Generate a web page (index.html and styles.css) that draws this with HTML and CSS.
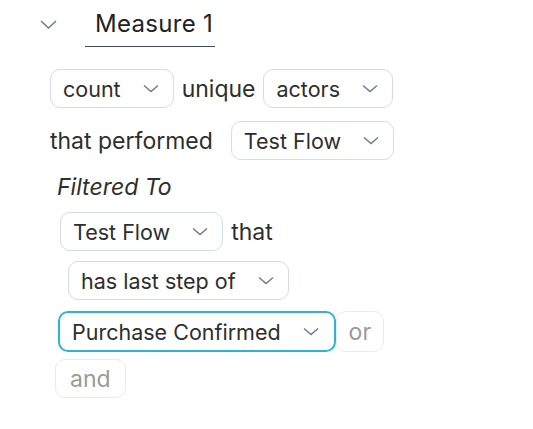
FILE: index.html
```html
<!DOCTYPE html>
<html>
<head>
<meta charset="utf-8">
<link rel="stylesheet" href="styles.css">
</head>
<body>
<div class="measure">
  <div class="header">
    <svg class="toggle" width="17" height="9" viewBox="0 0 17 9"><path d="M1 1l7.5 7L16 1" fill="none" stroke="#6b7a90" stroke-width="1.4"/></svg>
    <div class="title">Measure 1</div>
  </div>

  <div class="row r1">
    <div class="select"><span>count</span><svg class="chev" width="16" height="9" viewBox="0 0 16 9"><path d="M1 1.5l7 6 7-6" fill="none" stroke="#6b7a90" stroke-width="1.4"/></svg></div>
    <span class="word">unique</span>
    <div class="select"><span>actors</span><svg class="chev" width="16" height="9" viewBox="0 0 16 9"><path d="M1 1.5l7 6 7-6" fill="none" stroke="#6b7a90" stroke-width="1.4"/></svg></div>
  </div>

  <div class="row r2">
    <span class="word performed">that performed</span>
    <div class="select"><span>Test Flow</span><svg class="chev" width="16" height="9" viewBox="0 0 16 9"><path d="M1 1.5l7 6 7-6" fill="none" stroke="#6b7a90" stroke-width="1.4"/></svg></div>
  </div>

  <div class="filtered">Filtered To</div>

  <div class="row r3">
    <div class="select"><span>Test Flow</span><svg class="chev" width="16" height="9" viewBox="0 0 16 9"><path d="M1 1.5l7 6 7-6" fill="none" stroke="#6b7a90" stroke-width="1.4"/></svg></div>
    <span class="word">that</span>
  </div>

  <div class="row r4">
    <div class="select"><span>has last step of</span><svg class="chev" width="16" height="9" viewBox="0 0 16 9"><path d="M1 1.5l7 6 7-6" fill="none" stroke="#6b7a90" stroke-width="1.4"/></svg></div>
  </div>

  <div class="row r5">
    <div class="select focused"><span>Purchase Confirmed</span><svg class="chev" width="16" height="9" viewBox="0 0 16 9"><path d="M1 1.5l7 6 7-6" fill="none" stroke="#6b7a90" stroke-width="1.4"/></svg></div>
    <div class="pill tall">or</div>
  </div>

  <div class="row r6">
    <div class="pill">and</div>
  </div>
</div>
</body>
</html>
```

FILE: styles.css
```css
* { box-sizing: border-box; }
body {
  margin: 0;
  background: #ffffff;
  font-family: "Inter", "Noto Sans", sans-serif;
  color: #2e2e2e;
  font-size: 21.5px;
}
.measure { display: flex; flex-direction: column; }
.header {
  display: flex;
  align-items: flex-start;
  padding-left: 40px;
  margin-top: 6px;
}
.toggle { margin-top: 14px; margin-right: 28px; flex: none; }
.title {
  width: 130px;
  padding: 0 0 4px 10px;
  font-size: 24px;
  letter-spacing: 0.3px;
  line-height: 36px;
  white-space: nowrap;
  color: #222;
  border-bottom: 1px solid #3d4b63;
}
.row {
  display: flex;
  align-items: center;
  gap: 8px;
}
.r1 { margin-top: 22px; padding-left: 50px; }
.r2 { margin-top: 13px; padding-left: 50px; }
.r3 { margin-top: 12px; padding-left: 60px; }
.r4 { margin-top: 10px; padding-left: 68px; }
.r5 { margin-top: 11px; padding-left: 58px; gap: 0; }
.r6 { margin-top: 7px; padding-left: 55px; }
.word { font-size: 23px; line-height: 28px; }
.performed { margin-right: 10px; }
.select {
  display: flex;
  align-items: center;
  gap: 22px;
  height: 39px;
  padding: 0 14px 0 12px;
  border: 1px solid #d5dce4;
  border-radius: 10px;
  line-height: 24px;
  background: #fff;
}
.select.focused {
  height: 41px;
  border: 2px solid #2bb5cf;
  padding: 0 15px 0 12px;
}
.chev { flex: none; }
.filtered {
  margin-top: 14px;
  padding-left: 57px;
  font-size: 23px;
  font-style: italic;
  line-height: 26px;
}
.pill {
  display: flex;
  align-items: center;
  height: 39px;
  padding: 0 14px;
  border: 1px solid #e6ebf0;
  border-radius: 10px;
  color: #9a9a9a;
  font-size: 23px;
  line-height: 26px;
}
.pill.tall { height: 41px; padding: 0 12px; }
```
